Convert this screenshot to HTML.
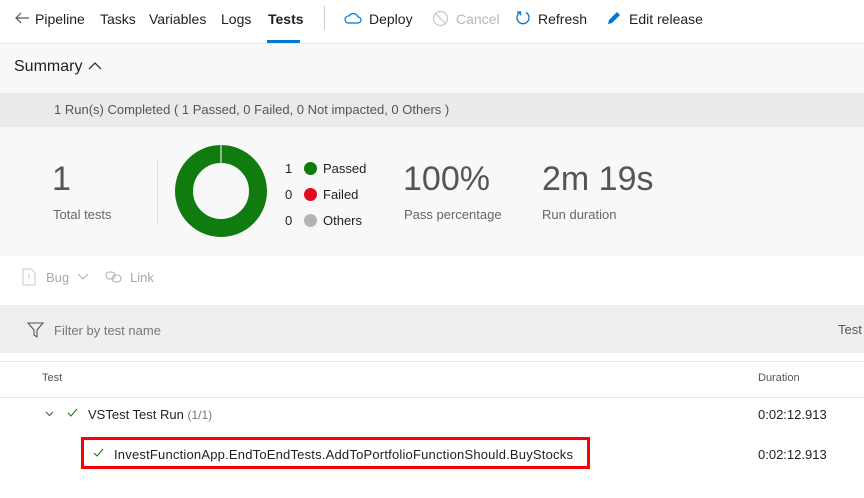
<!DOCTYPE html>
<html><head><style>
body{margin:0;width:864px;height:498px;overflow:hidden;background:#fff;font-family:"Liberation Sans",sans-serif;color:#201f1e;position:relative}
.a{position:absolute;white-space:nowrap}
</style></head><body>
<div class="a" style="left:0;top:0;width:864px;height:43px;background:#fff"></div>
<svg class="a" style="left:14px;top:11px" width="16" height="14"><path d="M15 7H2M7 2L2 7l5 5" fill="none" stroke="#555" stroke-width="1.2"/></svg>
<div class="a" style="left:35px;top:11px;font-size:14px">Pipeline</div>
<div class="a" style="left:100px;top:11px;font-size:14px">Tasks</div>
<div class="a" style="left:149px;top:11px;font-size:14px">Variables</div>
<div class="a" style="left:221px;top:11px;font-size:14px">Logs</div>
<div class="a" style="left:268px;top:11px;font-size:14px;font-weight:bold">Tests</div>
<div class="a" style="left:267px;top:40px;width:33px;height:3px;background:#0078d4"></div>
<div class="a" style="left:324px;top:6px;width:1px;height:24px;background:#ccc"></div>
<svg class="a" style="left:344px;top:11px" width="18" height="14"><path d="M4 12h10a3 3 0 0 0 0-6a5 5 0 0 0-9-1a3.5 3.5 0 0 0-1 7z" fill="none" stroke="#0078d4" stroke-width="1.2"/></svg>
<div class="a" style="left:369px;top:11px;font-size:14px">Deploy</div>
<svg class="a" style="left:432px;top:10px" width="17" height="17"><circle cx="8.5" cy="8.5" r="7" fill="none" stroke="#c8c8c8" stroke-width="1.2"/><path d="M3.5 3.5l10 10" stroke="#c8c8c8" stroke-width="1.2"/></svg>
<div class="a" style="left:456px;top:11px;font-size:14px;color:#b8b8b8">Cancel</div>
<svg class="a" style="left:515px;top:9px" width="16" height="17"><path d="M5 3.5a6 6 0 1 0 6 0" fill="none" stroke="#0078d4" stroke-width="1.3"/><path d="M2 3h3.5v3.5" fill="none" stroke="#0078d4" stroke-width="1.3"/></svg>
<div class="a" style="left:538px;top:11px;font-size:14px">Refresh</div>
<svg class="a" style="left:606px;top:10px" width="16" height="16"><path d="M2 14l1-4 8-8 3 3-8 8z" fill="#0078d4"/></svg>
<div class="a" style="left:629px;top:11px;font-size:14px">Edit release</div>
<div class="a" style="left:0;top:43px;width:864px;height:213px;background:#f8f8f8"></div>
<div class="a" style="left:0;top:43px;width:864px;height:1px;background:#e6e6e6"></div>
<div class="a" style="left:14px;top:58px;font-size:16px">Summary</div>
<svg class="a" style="left:88px;top:61px" width="14" height="10"><path d="M1 8l6-6 6 6" fill="none" stroke="#333" stroke-width="1.3"/></svg>
<div class="a" style="left:0;top:93px;width:864px;height:34px;background:#eaeaea"></div>
<div class="a" style="left:54px;top:102px;font-size:13px;color:#555">1 Run(s) Completed ( 1 Passed, 0 Failed, 0 Not impacted, 0 Others )</div>
<div class="a" style="left:52px;top:160px;font-size:34px;color:#555">1</div>
<div class="a" style="left:53px;top:207px;font-size:13px;color:#666">Total tests</div>
<div class="a" style="left:157px;top:160px;width:1px;height:64px;background:#ddd"></div>
<svg class="a" style="left:175px;top:145px" width="92" height="92"><circle cx="46" cy="46" r="37" fill="none" stroke="#107c10" stroke-width="18"/><path d="M46 0v19" stroke="#fff" stroke-width="1"/></svg>
<div class="a" style="left:285px;top:161px;font-size:13px">1</div>
<div class="a" style="left:304px;top:162px;width:13px;height:13px;border-radius:50%;background:#107c10"></div>
<div class="a" style="left:323px;top:161px;font-size:13px">Passed</div>
<div class="a" style="left:285px;top:187px;font-size:13px">0</div>
<div class="a" style="left:304px;top:188px;width:13px;height:13px;border-radius:50%;background:#e00b1c"></div>
<div class="a" style="left:323px;top:187px;font-size:13px">Failed</div>
<div class="a" style="left:285px;top:213px;font-size:13px">0</div>
<div class="a" style="left:304px;top:214px;width:13px;height:13px;border-radius:50%;background:#b4b4b4"></div>
<div class="a" style="left:323px;top:213px;font-size:13px">Others</div>
<div class="a" style="left:403px;top:160px;font-size:34px;color:#555">100%</div>
<div class="a" style="left:404px;top:207px;font-size:13px;color:#666">Pass percentage</div>
<div class="a" style="left:542px;top:160px;font-size:34px;color:#555">2m 19s</div>
<div class="a" style="left:542px;top:207px;font-size:13px;color:#666">Run duration</div>
<svg class="a" style="left:22px;top:268px" width="14" height="18"><path d="M1 1h8l4 4v12H1z" fill="none" stroke="#c8c8c8"/><path d="M7 6v5M7 13v1" stroke="#c8c8c8"/></svg>
<div class="a" style="left:46px;top:270px;font-size:13px;color:#a8a8a8">Bug</div>
<svg class="a" style="left:77px;top:273px" width="12" height="8"><path d="M1 1l5 5 5-5" fill="none" stroke="#b0b0b0"/></svg>
<svg class="a" style="left:105px;top:270px" width="18" height="14"><rect x="1" y="2" width="9" height="7" rx="3.5" fill="none" stroke="#b0b0b0"/><rect x="7" y="5" width="9" height="7" rx="3.5" fill="none" stroke="#b0b0b0"/></svg>
<div class="a" style="left:130px;top:270px;font-size:13px;color:#a8a8a8">Link</div>
<div class="a" style="left:0;top:305px;width:864px;height:48px;background:#efefef"></div>
<svg class="a" style="left:27px;top:321px" width="18" height="18"><path d="M1 2h15l-6 7v7l-3-2V9z" fill="none" stroke="#555" stroke-width="1.1"/></svg>
<div class="a" style="left:54px;top:323px;font-size:13px;color:#777">Filter by test name</div>
<div class="a" style="left:838px;top:322px;font-size:13px;color:#555">Test</div>
<div class="a" style="left:0;top:361px;width:864px;height:1px;background:#e6e6e6"></div>
<div class="a" style="left:42px;top:372px;font-size:11px;color:#555">Test</div>
<div class="a" style="left:758px;top:372px;font-size:11px;color:#555">Duration</div>
<div class="a" style="left:0;top:397px;width:864px;height:1px;background:#e6e6e6"></div>
<svg class="a" style="left:45px;top:411px" width="9" height="6"><path d="M1 1l3.5 3.5L8 1" fill="none" stroke="#555" stroke-width="1.1"/></svg>
<svg class="a" style="left:67px;top:408px" width="11" height="9"><path d="M1 5l3 3 6-7" fill="none" stroke="#107c10" stroke-width="1.1"/></svg>
<div class="a" style="left:88px;top:407px;font-size:13px">VSTest Test Run <span style="color:#777;font-size:12px">(1/1)</span></div>
<div class="a" style="left:758px;top:407px;font-size:13px">0:02:12.913</div>
<div class="a" style="left:81px;top:437px;width:509px;height:32px;border:3px solid #f00;box-sizing:border-box"></div>
<svg class="a" style="left:93px;top:448px" width="11" height="9"><path d="M1 5l3 3 6-7" fill="none" stroke="#107c10" stroke-width="1.1"/></svg>
<div class="a" style="left:114px;top:447px;font-size:13px;letter-spacing:0.2px">InvestFunctionApp.EndToEndTests.AddToPortfolioFunctionShould.BuyStocks</div>
<div class="a" style="left:758px;top:447px;font-size:13px">0:02:12.913</div>
</body></html>
